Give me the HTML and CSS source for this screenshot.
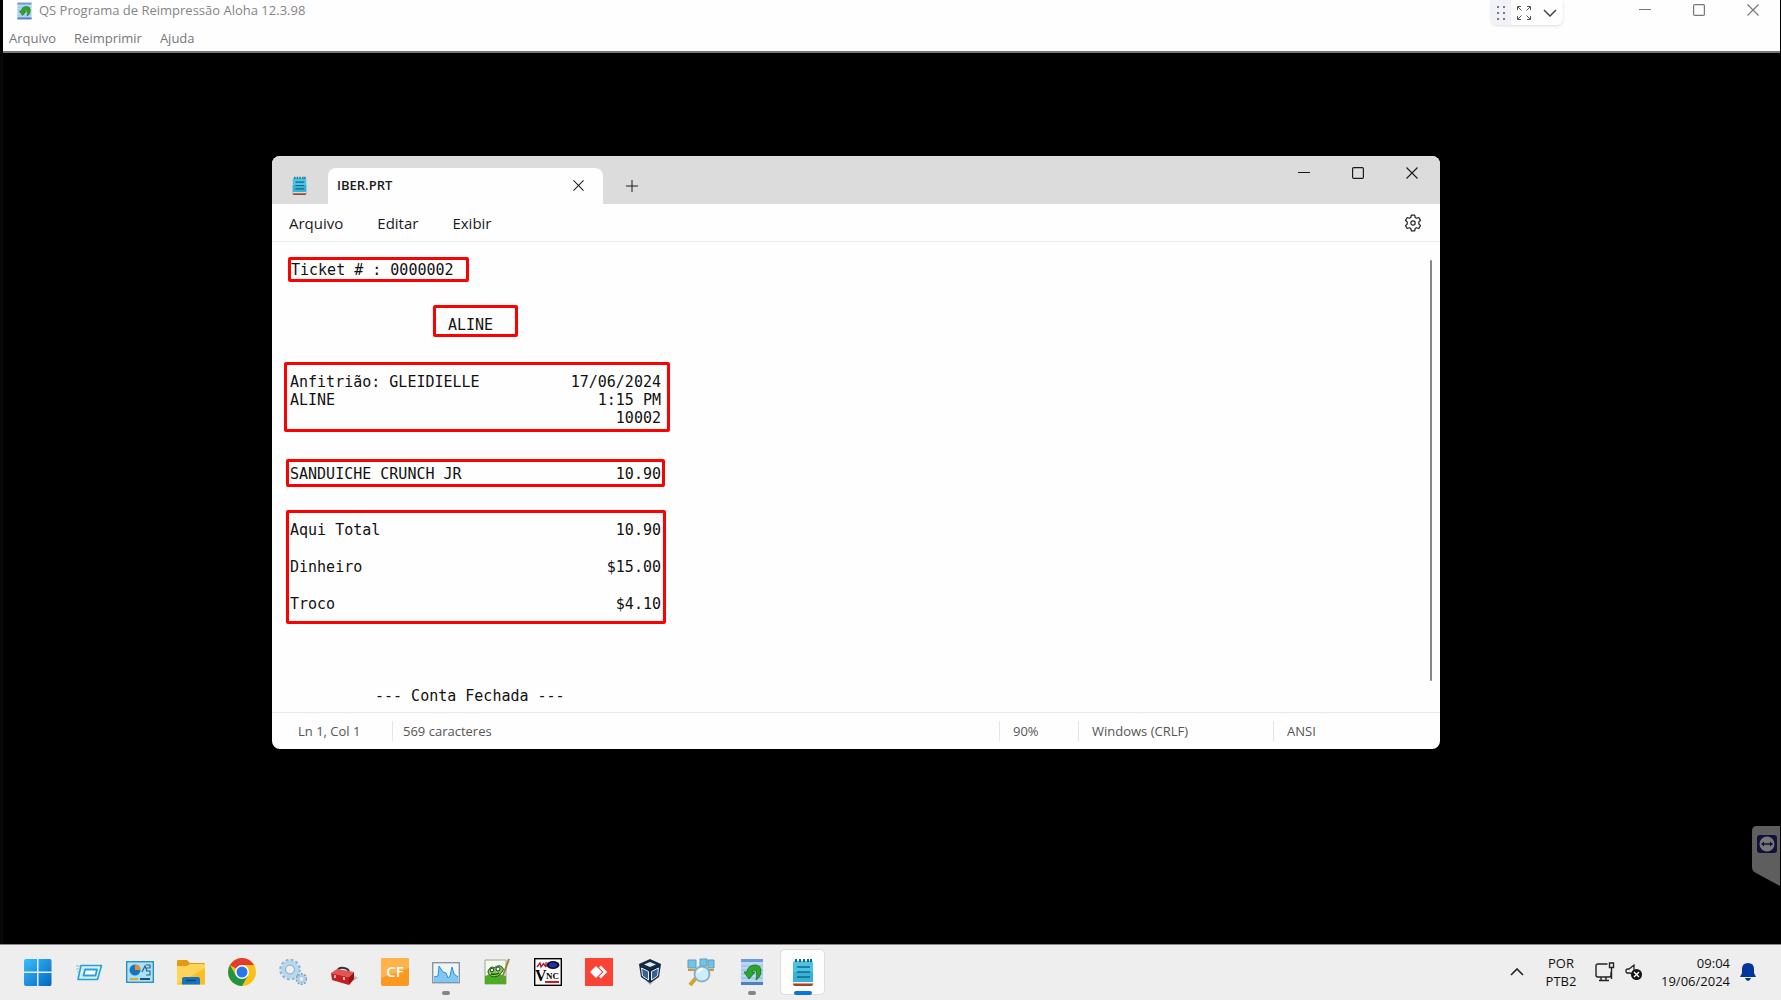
FILE: index.html
```html
<!DOCTYPE html>
<html lang="pt-BR">
<head>
<meta charset="utf-8">
<title>QS Programa de Reimpressão Aloha 12.3.98</title>
<link rel="stylesheet" href="styles.css">
</head>
<body>
<svg class="symbols" aria-hidden="true">
  <symbol id="i-reprint" viewBox="0 0 24 28">
    <rect x="1" y="1" width="22" height="26" fill="#b9d7f5"/>
    <path d="M1 1h22v3H1z" fill="#6c9ad6"/><path d="M1 8h22M1 12h22M1 16h22M1 20h22" stroke="#8fb6e4"/>
    <path d="M1 24h22v3H1z" fill="#4f7fc6"/>
    <path d="M16 22q5-3 5-9 0-6-6-6-7 0-8 7H4l5 7 6-7h-3q1-3 3-2 3 3 1 10z" fill="#2ba52b" stroke="#12700f" stroke-width=".8"/>
  </symbol>
  <symbol id="i-notepad" viewBox="0 0 22 28">
    <path d="M1 5q0-2 2-2h16q2 0 2 2v20H1z" fill="#4cc3e4"/><path d="M1 14h20v11H1z" fill="#38b1d9"/>
    <path d="M1 25h20v1q0 2-2 2H3q-2 0-2-2z" fill="#a2461c"/><path d="M1 24h20v1.500H1z" fill="#f4f4f4"/>
    <path d="M4 1v3M8 1v3M12 1v3M16 1v3M19 1v3" stroke="#136682" stroke-width="2"/>
    <path d="M5 9h13M5 14h13M5 19h13" stroke="#136a87" stroke-width="1.700"/>
  </symbol>
  <symbol id="i-min" viewBox="0 0 12 12"><path d="M0 5.500h12" stroke="currentColor"/></symbol>
  <symbol id="i-max" viewBox="0 0 12 12"><rect x=".6" y=".6" width="10.800" height="10.800" rx="1.200" fill="none" stroke="currentColor" stroke-width="1.200"/></symbol>
  <symbol id="i-close" viewBox="0 0 12 12"><path d="M.5.5l11 11M11.500.5l-11 11" stroke="currentColor" stroke-width="1.100"/></symbol>
</svg>

<header class="app">
  <div class="titlebar">
    <svg class="app-icon"><use href="#i-reprint"/></svg>
    <h1>QS Programa de Reimpressão Aloha 12.3.98</h1>
    <div class="session">
      <button class="grip" aria-label="Mover"><svg width="8" height="16" viewBox="0 0 8 16" fill="#777b85"><path d="M0 1h2v2H0zM6 1h2v2H6zM0 7h2v2H0zM6 7h2v2H6zM0 13h2v2H0zM6 13h2v2H6z"/></svg></button>
      <button aria-label="Tela cheia"><svg width="14" height="14" viewBox="0 0 14 14" fill="none" stroke="#555"><path d="M.5 4V.5H4M.5.5l4 4M10 .5h3.500V4M13.500.5l-4 4M.5 10v3.500H4M.5 13.500l4-4M13.500 10v3.500H10M13.500 13.500l-4-4"/></svg></button>
      <button aria-label="Opções"><svg width="14" height="8" viewBox="0 0 14 8" fill="none" stroke="#444" stroke-width="1.500"><path d="M1 1l6 6 6-6"/></svg></button>
    </div>
    <div class="controls">
      <button aria-label="Minimizar"><svg><use href="#i-min"/></svg></button>
      <button aria-label="Maximizar"><svg><use href="#i-max"/></svg></button>
      <button aria-label="Fechar"><svg><use href="#i-close"/></svg></button>
    </div>
  </div>
  <nav class="app-menu"><button>Arquivo</button><button>Reimprimir</button><button>Ajuda</button></nav>
</header>

<main class="desktop">
  <section class="notepad">
    <div class="tabs">
      <svg class="np-icon"><use href="#i-notepad"/></svg>
      <div class="tab"><span>IBER.PRT</span><button aria-label="Fechar guia"><svg><use href="#i-close"/></svg></button></div>
      <button class="new-tab" aria-label="Nova guia"><svg viewBox="0 0 12 12"><path d="M6 0v12M0 6h12" stroke="currentColor"/></svg></button>
      <div class="controls">
        <button aria-label="Minimizar"><svg><use href="#i-min"/></svg></button>
        <button aria-label="Maximizar"><svg><use href="#i-max"/></svg></button>
        <button aria-label="Fechar"><svg><use href="#i-close"/></svg></button>
      </div>
    </div>
    <nav class="np-menu">
      <button>Arquivo</button><button>Editar</button><button>Exibir</button>
      <button class="gear" aria-label="Configurações"><svg width="18" height="18" viewBox="0 0 18 18" fill="none" stroke="#222" stroke-width="1.200" stroke-linejoin="round"><path d="M7.300 1.200h3.400l.5 2.300 1.300.8 2.300-.8 1.700 2.900-1.700 1.600v2l1.700 1.600-1.700 2.900-2.300-.8-1.300.8-.5 2.300H7.300l-.5-2.300-1.300-.8-2.300.8-1.700-2.900L3.200 10V8L1.500 6.400l1.700-2.900 2.300.8 1.300-.8z"/><circle cx="9" cy="9" r="2.200"/></svg></button>
    </nav>
    <div class="editor">
      <div class="receipt">
        <div class="mark ticket">Ticket # : 0000002</div>
        <div class="mark name">ALINE</div>
        <div class="mark host">
          <div class="row"><span>Anfitrião: GLEIDIELLE</span><span>17/06/2024</span></div>
          <div class="row"><span>ALINE</span><span>1:15 PM</span></div>
          <div class="row end"><span>10002</span></div>
        </div>
        <div class="mark item"><div class="row"><span>SANDUICHE CRUNCH JR</span><span>10.90</span></div></div>
        <div class="mark totals">
          <div class="row"><span>Aqui Total</span><span>10.90</span></div>
          <div class="row"><span>Dinheiro</span><span>$15.00</span></div>
          <div class="row"><span>Troco</span><span>$4.10</span></div>
        </div>
        <div class="closed">--- Conta Fechada ---</div>
      </div>
      <div class="scroll"></div>
    </div>
    <footer class="status">
      <span class="pos">Ln 1, Col 1</span><span class="count">569 caracteres</span><span class="zoom">90%</span><span class="eol">Windows (CRLF)</span><span class="enc">ANSI</span>
    </footer>
  </section>
  <button class="remote" aria-label="TeamViewer"><svg width="28" height="60" viewBox="0 0 28 60"><path d="M28 0H5Q0 0 0 5v36q0 4 4 6l24 13z" fill="#5e5e5e"/><rect x="5" y="9" width="20" height="18" rx="3" fill="#10103a"/><circle cx="15" cy="18" r="7.500" fill="#777"/><path d="M9 18l3-2.500v1.700h6v-1.700l3 2.500-3 2.500v-1.700h-6v1.700z" fill="#10103a"/></svg></button>
</main>

<footer class="taskbar">
  <div class="apps">
    <button aria-label="Iniciar"><svg viewBox="0 0 28 28"><defs><linearGradient id="w" x1="0" y1="0" x2="1" y2="1"><stop stop-color="#35c0fa"/><stop offset="1" stop-color="#0465c4"/></linearGradient></defs><path d="M2 1h11v12.500H0V3q0-2 2-2zM14.500 1H26q1.500 0 1.500 2v10.500h-13zM0 15h13v13H2q-2 0-2-2zM14.500 15h13v11q0 2-1.500 2H14.500z" fill="url(#w)"/></svg></button>
    <button aria-label="Executar"><svg viewBox="0 0 28 28"><path d="M6 7.500h20.500l-4 14H3z" fill="#d3f2fd" stroke="#2b9fd6" stroke-width="1.600" stroke-linejoin="round"/><path d="M10 11.500h12l-1.500 6H8.500z" fill="#fff" stroke="#2b9fd6" stroke-width="1.800" stroke-linejoin="round"/><path d="M1 8h4M1 11h4M2 14h2" stroke="#74c8ea"/></svg></button>
    <button aria-label="Painel de Controle"><svg viewBox="0 0 28 28"><rect x=".7" y="3.700" width="26.600" height="20.600" fill="#a9e1f8" stroke="#2d91bd" stroke-width="1.400"/><circle cx="9" cy="12" r="5.500" fill="#1674c4"/><path d="M9 12V6.500a5.500 5.500 0 0 1 5.500 5.500z" fill="#f28b24"/><path d="M16 14l3-6 2 5M20 7h4v3h-4M20 13h4v4h-4" fill="none" stroke="#27658c" stroke-width="1.200"/><path d="M4 21h8" stroke="#e3a83c" stroke-width="2"/><path d="M14 21h10" stroke="#214f70" stroke-width="2"/></svg></button>
    <button aria-label="Explorador de Arquivos"><svg viewBox="0 0 28 28"><path d="M0 3q0-1 1-1h9l3 3h14q1 0 1 1v5H0z" fill="#e39a10"/><path d="M0 8h10l3-2h15v20.500H0z" fill="#fed45a"/><path d="M0 26.500L28 10v16.500z" fill="#fbbf26"/><path d="M5 26.500V21q0-2 2-2h14q2 0 2 2v5.500z" fill="#1873bd"/><path d="M9 22.500h10" stroke="#0b4777" stroke-width="1.500"/></svg></button>
    <button aria-label="Chrome"><svg viewBox="0 0 28 28"><circle cx="14" cy="14" r="14" fill="#fbc116"/><path d="M14 14L1.900 7A14 14 0 0 1 26.100 7H14z" fill="#e33b2e"/><path d="M1.900 7A14 14 0 0 0 14 28l6-10.500L14 14 8 17.500z" fill="#229342"/><circle cx="14" cy="14" r="7" fill="#fff"/><circle cx="14" cy="14" r="5.500" fill="#2b76e8"/></svg></button>
    <button aria-label="Serviços"><svg viewBox="0 0 28 28" fill="none"><circle cx="11" cy="11.500" r="9.500" stroke="#8eb6d4" stroke-width="2.500" stroke-dasharray="3 2"/><circle cx="11" cy="11.500" r="7" stroke="#b4d8ef" stroke-width="4"/><circle cx="11" cy="11.500" r="4.500" stroke="#7f9fb9"/><circle cx="22.500" cy="21" r="5" stroke="#7fa4c2" stroke-width="2" stroke-dasharray="2 1.200"/><circle cx="22.500" cy="21" r="3.200" stroke="#a9cfea" stroke-width="2.500"/></svg></button>
    <button aria-label="Ferramentas"><svg viewBox="0 0 28 28"><path d="M18 26l10-6-3-2-8 4z" fill="#bbb"/><path d="M8 12q1-3 6-2t5 4" fill="none" stroke="#333" stroke-width="1.800"/><path d="M1 15l6-4 17 3-5 5z" fill="#e55450"/><path d="M1 15l18 4v8L2 22z" fill="#c81e22"/><path d="M19 19l5-5v7l-5 6z" fill="#911"/><path d="M5 17v3M14 19v3" stroke="#eee" stroke-width="1.500"/></svg></button>
    <button aria-label="CF"><svg viewBox="0 0 28 28"><rect width="28" height="28" rx="2" fill="#fb981f"/><path d="M0 2q0-2 2-2h24q2 0 2 2v8L0 20z" fill="#ffb34a"/><text x="14" y="19" text-anchor="middle" class="cf">CF</text></svg></button>
    <button class="open" aria-label="Monitor"><svg viewBox="0 0 28 28"><rect x=".7" y="4.700" width="26.600" height="20" fill="#eff5fb" stroke="#8796a5" stroke-width="1.400"/><path d="M2 24v-5l4-1 1-10 4 6 3 1 2 5 2-2 2-9 2 7 4 3v5z" fill="#7fc8f3"/><path d="M2 19l4-1 1-10 4 6 3 1 2 5 2-2 2-9 2 7 4 3" fill="none" stroke="#2e91d1"/></svg></button>
    <button aria-label="Editor"><svg viewBox="0 0 28 28"><path d="M2 2h21v24H2z" fill="#f5faef" stroke="#9aa88e"/><path d="M2 18q9-5 21 0v8H2z" fill="#4aad22"/><path d="M5 13q3-6 6-3 5-4 8-1 3 2 0 5-3 5-8 5-6-1-6-6z" fill="#8acb4d" stroke="#1e5914"/><circle cx="9" cy="12" r="1.800" fill="#fff" stroke="#234"/><circle cx="15" cy="11" r="2" fill="#fff" stroke="#234"/><path d="M8 16q5 1 8-1" fill="none" stroke="#174b10" stroke-width="1.500"/><path d="M18 23L26 1" stroke="#9b8247" stroke-width="2"/></svg></button>
    <button aria-label="VNC"><svg viewBox="0 0 28 28"><rect x=".7" y=".7" width="26.600" height="26.600" fill="#fff" stroke="#000" stroke-width="1.400"/><path d="M3 9l3-4 1 4 3-4M9 5l3 4M12 4v5" stroke="#b3123a" stroke-width="1.300" fill="none"/><ellipse cx="19" cy="7" rx="6.500" ry="4" fill="#111"/><ellipse cx="19" cy="7" rx="4" ry="2.500" fill="#242ac5"/><text x="1" y="23" class="vnc-v">V</text><text x="12" y="21" class="vnc">NC</text><path d="M11 24h14" stroke="#e01020" stroke-width="2"/></svg></button>
    <button aria-label="AnyDesk"><svg viewBox="0 0 28 28"><path d="M0 0h28v28H0z" fill="#fa4335"/><path d="M5 14l6-6 6 6-6 6z" fill="#fff"/><path d="M15 8.500l5.500 5.500-5.500 5.500" fill="none" stroke="#fff" stroke-width="2.600"/></svg></button>
    <button aria-label="VirtualBox"><svg viewBox="0 0 28 28"><path d="M5 17l9 10 10-10z" fill="#a9b2bd"/><path d="M3 6l11-5 11 5-2 13-9 6-9-6z" fill="#142844"/><path d="M8 6.500L14 4l6 2.500L14 9z" fill="#dce8f2"/><path d="M5.500 10l7 3.500v8.500l-6-4zM22.500 10l-7 3.500v8.500l6-4z" fill="#37618f" stroke="#e4eef7"/></svg></button>
    <button aria-label="Pesquisa de rede"><svg viewBox="0 0 28 28"><path d="M1 2h8v8H1zM13 1h7v7h-7zM21 2h6v8h-6z" fill="#62c8f0" stroke="#7895a9"/><path d="M1 12h10M18 12h9" stroke="#c79d32" stroke-width="2"/><path d="M9 20l-6 7" stroke="#d6a42b" stroke-width="4"/><circle cx="15" cy="16" r="7.500" fill="#cbeefa" stroke="#87afc3" stroke-width="1.800"/><path d="M11 15q1-4 5-4" fill="none" stroke="#fff" stroke-width="2"/></svg></button>
    <button class="open" aria-label="Reimpressão"><svg><use href="#i-reprint"/></svg></button>
    <button class="active" aria-label="Bloco de Notas"><svg><use href="#i-notepad"/></svg></button>
  </div>
  <div class="tray">
    <button aria-label="Ícones ocultos"><svg width="14" height="8" viewBox="0 0 14 8" fill="none" stroke="#222" stroke-width="1.600"><path d="M1 7l6-6 6 6"/></svg></button>
    <button class="lang">POR<br>PTB2</button>
    <button class="net" aria-label="Rede e som"><svg width="20" height="20" viewBox="0 0 20 20" fill="none" stroke="#222" stroke-width="1.400"><path d="M12.500 2H3Q1 2 1 4v9q0 2 2 2h11q2 0 2-2v-3M6 15v3M11 15v3M4 18.500h10M14.500 1h4v4.500h-4zM16.500 5.500V17"/></svg><svg width="18" height="18" viewBox="0 0 18 18"><path d="M8 12L5 10H3Q1 10 1 8.500v-1Q1 6 3 6h1l5-4v5" fill="none" stroke="#222" stroke-width="1.300"/><circle cx="11.500" cy="11.500" r="5.500" fill="#111"/><path d="M9 9l5 5M14 9l-5 5" stroke="#fff" stroke-width="1.400"/></svg></button>
    <button class="clock">09:04<br>19/06/2024</button>
    <button aria-label="Notificações"><svg width="16" height="18" viewBox="0 0 16 18" fill="#00369b"><path d="M8 0q6 0 6 6v4l2 4H0l2-4V6q0-6 6-6zM5 15h6q-1 3-3 3t-3-3z"/></svg></button>
  </div>
</footer>
</body>
</html>
```
FILE: styles.css
```css
* { box-sizing: border-box; }

body {
  margin: 0;
  min-height: 100vh;
  display: flex;
  flex-direction: column;
  background: #000;
  color: #1a1a1a;
  font-family: "Open Sans", "Noto Sans", sans-serif;
  font-size: 13px;
}

button {
  display: flex;
  align-items: center;
  justify-content: center;
  padding: 0;
  border: 0;
  background: none;
  color: inherit;
  font: inherit;
}

svg { display: block; flex: none; }
.symbols { position: absolute; width: 0; height: 0; }

/* Host application */
.app {
  margin: 0 1px 0 3px;
  background: #fefefe;
  border-bottom: 2px solid #777;
  color: #777;
}
.titlebar { display: flex; height: 25px; padding-left: 13px; }
.app-icon { width: 17px; height: 18px; margin-top: 2px; }
.titlebar h1 {
  margin: 0 auto 0 6px;
  font-size: 13px;
  font-weight: 400;
  line-height: 20px;
  color: #858585;
}
.session {
  display: flex;
  width: 72px;
  margin-right: 55px;
  border-radius: 0 0 6px 6px;
  overflow: hidden;
  box-shadow: 0 1px 3px #ddd;
}
.session button { flex: 1; }
.session .grip { flex: 0 0 20px; background: #f0f2f7; }
.controls { display: flex; }
.controls button { width: 54px; height: 20px; }
.controls svg { width: 12px; height: 12px; }
.app-menu { display: flex; gap: 18px; height: 26px; padding: 0 6px; }
.app-menu button { height: 26px; }

/* Desktop */
.desktop { position: relative; flex: 1; min-height: 720px; border-left: 3px solid #080808; }
.notepad {
  position: absolute;
  left: 269px;
  right: 341px;
  top: 103px;
  border-radius: 8px;
  overflow: hidden;
  background: #fefefe;
}
.tabs { display: flex; height: 48px; padding-left: 20px; background: #dcdcdc; }
.np-icon { width: 15px; height: 19px; margin: 20px 21px 0 0; }
.tab {
  display: flex;
  align-items: center;
  justify-content: space-between;
  width: 275px;
  margin-top: 12px;
  padding: 0 19px 2px 9px;
  border-radius: 8px 8px 0 0;
  background: #fefefe;
  font-weight: 600;
}
.tab svg { width: 11px; height: 11px; }
.new-tab { width: 58px; margin: 12px auto 0 0; }
.new-tab svg { width: 12px; height: 12px; }
.tabs .controls { padding-right: 1px; }
.tabs .controls button { height: 34px; }
.np-menu {
  display: flex;
  gap: 34px;
  height: 38px;
  padding: 0 18px 0 17px;
  border-bottom: 1px solid #ebebeb;
  font-size: 15px;
}
.np-menu .gear { margin-left: auto; }

.editor { display: flex; justify-content: space-between; height: 470px; padding: 15px 8px 0 12px; }
.receipt {
  display: flex;
  flex-direction: column;
  align-items: flex-start;
  font-family: "DejaVu Sans Mono", monospace;
  font-size: 15px;
  line-height: 18px;
  color: #111;
  white-space: nowrap;
}
.mark { border: 3px solid #f00; border-radius: 2px; }
.row { display: flex; justify-content: space-between; }
.row.end { justify-content: flex-end; }
.ticket { width: 181px; height: 25px; margin-left: 4px; padding-top: 1px; }
.name { width: 85px; height: 32px; margin: 23px 0 25px 149px; padding: 8px 0 0 12px; }
.host { width: 386px; padding: 8px 6px 2px 3px; }
.item { width: 379px; margin: 27px 0 23px 2px; padding: 3px 1px 1px; }
.totals {
  display: flex;
  flex-direction: column;
  gap: 19px;
  width: 380px;
  margin-left: 2px;
  padding: 8px 2px 8px 1px;
}
.closed { margin: 63px 0 0 91px; }
.scroll { width: 2px; height: 421px; margin-top: 3px; border-radius: 1px; background: #868686; }

.status {
  display: flex;
  align-items: center;
  height: 37px;
  border-top: 1px solid #e8e8e8;
  color: #555;
}
.status span { height: 20px; line-height: 20px; }
.status span + span { padding-left: 13px; border-left: 1px solid #e5e5e5; }
.status .pos { width: 120px; padding-left: 26px; }
.status span.count { flex: 1; padding-left: 10px; }
.zoom { width: 79px; }
.eol { width: 195px; }
.enc { width: 167px; }

.remote { position: absolute; right: 1px; bottom: 58px; }

/* Taskbar */
.taskbar {
  display: flex;
  justify-content: space-between;
  height: 56px;
  padding: 0 25px 0 12px;
  border-top: 1px solid #888;
  background: #eee;
}
.apps { display: flex; }
.apps button { position: relative; width: 51px; height: 54px; }
.apps svg { width: 28px; height: 28px; }
.open::after, .active::after {
  content: "";
  position: absolute;
  bottom: 4px;
  width: 8px;
  height: 4px;
  border-radius: 2px;
  background: #858585;
}
.active::before {
  content: "";
  position: absolute;
  inset: 4px 3px;
  border: 1px solid #ddd;
  border-radius: 5px;
  background: #fdfdfd;
}
.active svg { position: relative; }
.active::after { width: 18px; background: #0a76d8; }
.tray { display: flex; align-items: center; height: 54px; line-height: 18px; color: #111; }
.lang { width: 36px; margin: 0 16px 0 19px; }
.net { gap: 10px; margin-right: 18px; }
.clock { margin-right: 10px; text-align: right; }
.cf { font: 600 15px "Open Sans", sans-serif; fill: #fff; }
.vnc-v { font: 700 16px "Liberation Serif", serif; }
.vnc { font: 700 9px "Liberation Serif", serif; }
```
